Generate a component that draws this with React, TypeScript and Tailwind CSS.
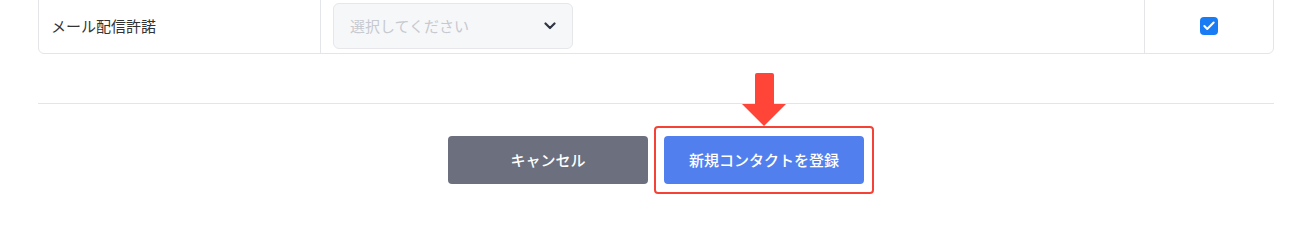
import { Check } from 'lucide-react';

function ChevronDown() {
  return (
    <svg width="12" height="8" viewBox="0 0 12 8" fill="none">
      <path d="M1.5 1.5 6 6l4.5-4.5" stroke="#2f3542" strokeWidth="2.2" strokeLinecap="round" strokeLinejoin="round" />
    </svg>
  );
}

export default function App() {
  return (
    <div
      className="min-h-screen bg-white overflow-hidden"
      style={{ fontFamily: '"Noto Sans CJK JP", "Noto Sans", sans-serif' }}
    >
      <div className="ml-[38px] w-[1236px]">
        {/* Form row */}
        <div className="-mt-[2px] border border-[#e3e5e9] rounded-b-md flex h-[56px]">
          <div className="w-[281px] shrink-0 flex items-center px-3 text-[15px] text-[#333333]">
            メール配信許諾
          </div>
          <div className="flex-1 border-l border-[#e3e5e9] py-1 pl-3 flex items-center">
            <div className="w-[240px] h-[46px] rounded-md border border-[#e5e7eb] bg-[#f6f7f9] flex items-center justify-between pl-4 pr-4">
              <span className="text-[15px] text-[#c6c9cf]">選択してください</span>
              <ChevronDown />
            </div>
          </div>
          <div className="w-[129px] shrink-0 border-l border-[#e3e5e9] flex items-center justify-center">
            <span className="w-[18px] h-[18px] rounded-[4px] bg-[#1a7cf5] flex items-center justify-center">
              <Check className="w-3.5 h-3.5 text-white" strokeWidth={3.5} />
            </span>
          </div>
        </div>

        {/* Footer actions */}
        <div className="mt-[49px] border-t border-[#e4e5e8] pt-8 flex justify-center gap-4">
          <button className="w-[200px] h-12 rounded-[4px] bg-[#6c6f7d] text-white text-[15px] font-medium">
            キャンセル
          </button>
          <div className="relative">
            <button className="w-[200px] h-12 rounded-[4px] bg-[#5180ee] text-white text-[15px] font-medium">
              新規コンタクトを登録
            </button>
            <div className="absolute -inset-[10px] border-2 border-[#f44336] rounded-[4px] pointer-events-none" />
            <div className="absolute left-1/2 -translate-x-1/2 top-[-63px] flex flex-col items-center">
              <div className="w-[19px] h-[31px] bg-[#ff4438] rounded-t-[2px]" />
              <div className="w-0 h-0 border-l-[22px] border-r-[22px] border-t-[22px] border-l-transparent border-r-transparent border-t-[#ff4438]" />
            </div>
          </div>
        </div>
      </div>
    </div>
  );
}
